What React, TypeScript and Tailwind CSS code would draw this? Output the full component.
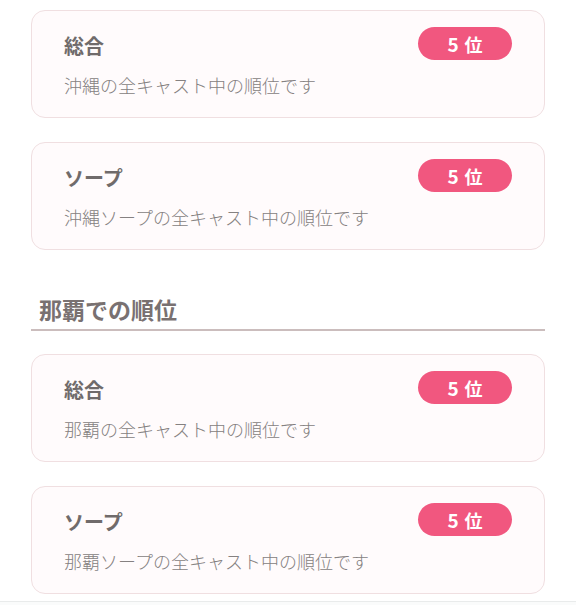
import React from 'react'

type Rank = {
  title: string
  desc: string
  rank: number
}

const okinawa: Rank[] = [
  { title: '総合', desc: '沖縄の全キャスト中の順位です', rank: 5 },
  { title: 'ソープ', desc: '沖縄ソープの全キャスト中の順位です', rank: 5 },
]

const naha: Rank[] = [
  { title: '総合', desc: '那覇の全キャスト中の順位です', rank: 5 },
  { title: 'ソープ', desc: '那覇ソープの全キャスト中の順位です', rank: 5 },
]

function RankCard({ title, desc, rank }: Rank) {
  return (
    <div className="rounded-[14px] border border-[#f0dfe1] bg-[#fffbfc] px-8 pt-4 pb-5">
      <div className="flex h-[33px] items-center justify-between">
        <span className="pt-[4px] text-[20px] leading-[28px] font-bold text-[#706b6b]">{title}</span>
        <span className="flex h-[33px] w-[94px] items-center justify-center gap-[6px] rounded-full bg-[#f1577f] text-white font-bold">
          <span className="text-[19px] leading-none">{rank}</span>
          <span className="text-[18px] leading-none">位</span>
        </span>
      </div>
      <p className="mt-[13px] text-[18px] leading-[24px] font-light text-[#858181]">{desc}</p>
    </div>
  )
}

export default function App() {
  return (
    <div
      className="min-h-[605px] bg-white"
      style={{ fontFamily: '"Noto Sans CJK JP", "Noto Sans", sans-serif' }}
    >
      <div className="px-[31px] pt-[10px]">
        <div className="flex flex-col gap-6">
          {okinawa.map((r) => (
            <RankCard key={r.desc} {...r} />
          ))}
        </div>

        {/* 那覇 */}
        <div className="mt-[44px] border-b-2 border-[#cbbdbd] pb-[5px] pl-[8px]">
          <h2 className="text-[23px] leading-[30px] font-bold text-[#797171]">那覇での順位</h2>
        </div>

        <div className="mt-[23px] flex flex-col gap-6">
          {naha.map((r) => (
            <RankCard key={r.desc} {...r} />
          ))}
        </div>
      </div>
      <div className="mt-[7px] h-[10px] border-t border-[#e9ebeb] bg-[#fafbfb]" />
    </div>
  )
}
